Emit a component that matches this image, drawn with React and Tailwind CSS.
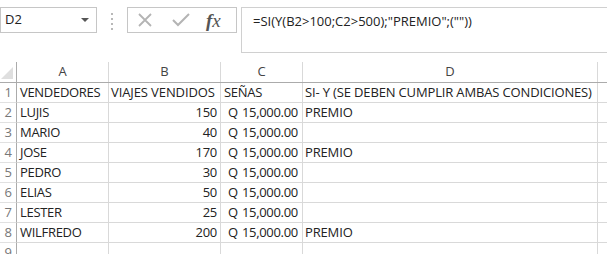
import React from 'react';

const cols = [
  { key: 'A', w: 'w-[92px]' },
  { key: 'B', w: 'w-[112px]' },
  { key: 'C', w: 'w-[82px]' },
  { key: 'D', w: 'w-[295px]' },
];

const rows = [
  ['VENDEDORES', 'VIAJES VENDIDOS', 'SEÑAS', 'SI- Y (SE DEBEN CUMPLIR AMBAS CONDICIONES)'],
  ['LUJIS', '150', true, 'PREMIO'],
  ['MARIO', '40', true, ''],
  ['JOSE', '170', true, 'PREMIO'],
  ['PEDRO', '30', true, ''],
  ['ELIAS', '50', true, ''],
  ['LESTER', '25', true, ''],
  ['WILFREDO', '200', true, 'PREMIO'],
  ['', '', false, ''],
];

const cellFont = { fontFamily: '"Open Sans", "Noto Sans", sans-serif' };

function Money() {
  return (
    <span className="flex w-full justify-between pl-[7px] pr-[4px]">
      <span>Q</span>
      <span>15,000.00</span>
    </span>
  );
}

function FormulaBar() {
  return (
    <div className="flex h-[58px] items-start bg-white pt-[7px]" style={cellFont}>
      <div className="relative flex h-[26px] w-[97px] items-center border border-[#c6c6c6] pl-[4px] text-[13px] text-[#222]">
        D2
        <span className="absolute right-[7px] top-[10px] h-0 w-0 border-x-[4px] border-t-[4px] border-x-transparent border-t-[#555]" />
      </div>
      <div className="flex w-[30px] flex-col items-center gap-[3px] pt-[6px]">
        <span className="h-[2px] w-[2px] bg-[#b8b8b8]" />
        <span className="h-[2px] w-[2px] bg-[#b8b8b8]" />
        <span className="h-[2px] w-[2px] bg-[#b8b8b8]" />
        <span className="h-[2px] w-[2px] bg-[#b8b8b8]" />
      </div>
      <div className="flex h-[26px] w-[110px] items-center border border-[#c6c6c6] pl-[9px]">
        <svg width="16" height="16" viewBox="0 0 16 16" className="mr-[19px]">
          <path d="M2 2 L14 14 M14 2 L2 14" stroke="#b4b4b4" strokeWidth="1.8" fill="none" />
        </svg>
        <svg width="18" height="14" viewBox="0 0 18 14" className="mr-[16px]">
          <path d="M1 7 L6 12 L17 1" stroke="#b4b4b4" strokeWidth="2" fill="none" />
        </svg>
        <span className="text-[19px] italic leading-none text-[#555]" style={{ fontFamily: '"Liberation Serif", serif' }}>
          <span className="font-bold">f</span>x
        </span>
      </div>
      <div className="ml-[4px] flex h-[46px] flex-1 items-start border border-r-0 border-[#d0d0d0] pl-[11px] pt-[4px] text-[13px] text-[#222]">
        =SI(Y(B2&gt;100;C2&gt;500);"PREMIO";(""))
      </div>
    </div>
  );
}

export default function App() {
  return (
    <div className="h-[254px] w-[607px] overflow-hidden bg-white">
      <FormulaBar />
      <div className="h-[4px]" />
      <div style={cellFont}>
        {/* column headers */}
        <div className="flex h-[21px] border-b border-[#ababab] text-[13px] text-[#444]">
          <div className="relative w-[17px] border-r border-[#ababab]">
            <span className="absolute bottom-[3px] right-[3px] h-0 w-0 border-b-[12px] border-l-[12px] border-b-[#dfdfdf] border-l-transparent" />
          </div>
          {cols.map((c) => (
            <div key={c.key} className={`${c.w} flex items-center justify-center border-r border-[#d9d9d9]`}>
              {c.key}
            </div>
          ))}
          <div className="flex-1" />
        </div>
        {rows.map((r, i) => (
          <div key={i} className="flex h-[20px] whitespace-nowrap text-[13px] tracking-[-0.3px] text-[#222]">
            <div className="flex w-[17px] items-center justify-center border-b border-r border-[#ababab] border-b-[#e1e1e1] text-[#777]">
              {i + 1}
            </div>
            <div className="flex w-[92px] items-center border-b border-r border-[#d9d9d9] pl-[3px]">{r[0]}</div>
            <div className={`flex w-[112px] items-center border-b border-r border-[#d9d9d9] ${i === 0 ? 'justify-start pl-[2px] tracking-[-0.1px]' : 'justify-end pr-[3px]'}`}>{r[1]}</div>
            <div className="flex w-[82px] items-center border-b border-r border-[#d9d9d9]">{r[2] === true ? <Money /> : <span className="pl-[3px]">{r[2]}</span>}</div>
            <div className="flex w-[295px] items-center overflow-hidden border-b border-r border-[#d9d9d9] pl-[2px] tracking-[-0.15px]">{r[3]}</div>
            <div className="flex-1 border-b border-[#d9d9d9]" />
          </div>
        ))}
      </div>
    </div>
  );
}
